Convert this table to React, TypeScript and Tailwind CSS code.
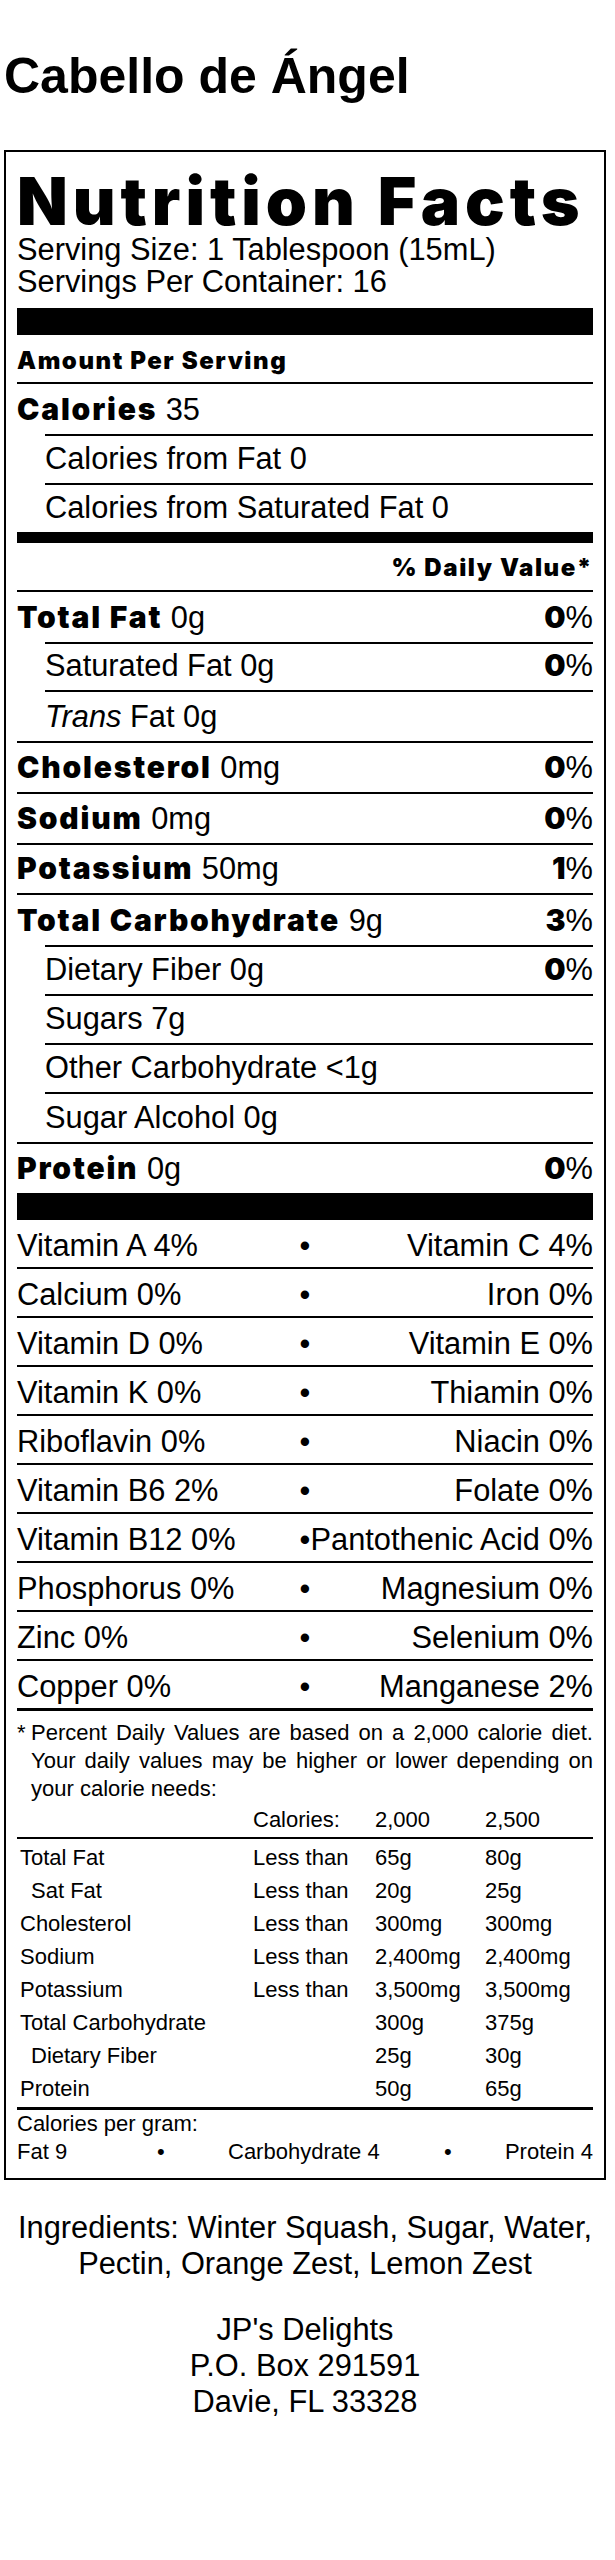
import React from "react";

const sans = "font-['Liberation_Sans',Arial,Helvetica,sans-serif]";
const heavy = "font-['Inter',sans-serif] font-black";
const label = `${heavy} text-[30px] tracking-[0.06em]`;

type Nut = {
  label: string;
  rest: string;
  dv?: string;
  bold?: boolean;
  indent?: boolean;
  italicTrans?: boolean;
  h: string;
};

const nutrients: Nut[] = [
  { label: "Total Fat", rest: "0g", dv: "0", bold: true, h: "h-[52px]" },
  { label: "Saturated Fat", rest: "0g", dv: "0", indent: true, h: "h-[48px]" },
  { label: "Fat", rest: "0g", indent: true, italicTrans: true, h: "h-[51px]" },
  { label: "Cholesterol", rest: "0mg", dv: "0", bold: true, h: "h-[51px]" },
  { label: "Sodium", rest: "0mg", dv: "0", bold: true, h: "h-[51px]" },
  { label: "Potassium", rest: "50mg", dv: "1", bold: true, h: "h-[50px]" },
  { label: "Total Carbohydrate", rest: "9g", dv: "3", bold: true, h: "h-[52px]" },
  { label: "Dietary Fiber", rest: "0g", dv: "0", indent: true, h: "h-[49px]" },
  { label: "Sugars", rest: "7g", indent: true, h: "h-[49px]" },
  { label: "Other Carbohydrate", rest: "<1g", indent: true, h: "h-[49px]" },
  { label: "Sugar Alcohol", rest: "0g", indent: true, h: "h-[50px]" },
  { label: "Protein", rest: "0g", dv: "0", bold: true, h: "h-[51px]" },
];

const vitamins: [string, string][] = [
  ["Vitamin A 4%", "Vitamin C 4%"],
  ["Calcium 0%", "Iron 0%"],
  ["Vitamin D 0%", "Vitamin E 0%"],
  ["Vitamin K 0%", "Thiamin 0%"],
  ["Riboflavin 0%", "Niacin 0%"],
  ["Vitamin B6 2%", "Folate 0%"],
  ["Vitamin B12 0%", "Pantothenic Acid 0%"],
  ["Phosphorus 0%", "Magnesium 0%"],
  ["Zinc 0%", "Selenium 0%"],
  ["Copper 0%", "Manganese 2%"],
];

const dvRows: [string, string, string, string, boolean][] = [
  ["Total Fat", "Less than", "65g", "80g", false],
  ["Sat Fat", "Less than", "20g", "25g", true],
  ["Cholesterol", "Less than", "300mg", "300mg", false],
  ["Sodium", "Less than", "2,400mg", "2,400mg", false],
  ["Potassium", "Less than", "3,500mg", "3,500mg", false],
  ["Total Carbohydrate", "", "300g", "375g", false],
  ["Dietary Fiber", "", "25g", "30g", true],
  ["Protein", "", "50g", "65g", false],
];

export default function App() {
  return (
    <div className={`${sans} w-[615px] bg-white pb-[120px] pl-[4px] pt-[48px] text-black`}>
      <h1 className="whitespace-nowrap text-[50px] font-bold leading-[56px]">Cabello de Ángel</h1>

      <div className="mt-[46px] w-[602px] border-2 border-black px-[11px] pb-[12px] pt-[16px]">
        <div className={`${heavy} whitespace-nowrap text-[66px] leading-[66px] tracking-[0.075em]`}>
          Nutrition Facts
        </div>
        <div className="text-[30.8px] leading-[32px]">Serving Size: 1 Tablespoon (15mL)</div>
        <div className="text-[30.8px] leading-[32px]">Servings Per Container: 16</div>
        <div className="mt-[10px] h-[27px] bg-black" />

        <div className={`flex h-[47px] items-end pb-[7px] ${heavy} text-[24px] leading-[28px] tracking-[0.065em]`}>
          Amount Per Serving
        </div>

        <div className="flex h-[52px] items-end border-t-2 border-black pb-[6px] text-[30.8px] leading-[36px]">
          <span>
            <span className={label}>Calories</span> 35
          </span>
        </div>
        <div className="ml-[28px] flex h-[49px] items-end border-t-2 border-black pb-[6px] text-[30.8px] leading-[36px]">
          Calories from Fat 0
        </div>
        <div className="ml-[28px] flex h-[49px] items-end border-t-2 border-black pb-[6px] text-[30.8px] leading-[36px]">
          Calories from Saturated Fat 0
        </div>
        <div className="h-[11px] bg-black" />

        <div
          className={`flex h-[47px] items-end justify-end pb-[8px] ${heavy} text-[24px] leading-[28px] tracking-[0.065em]`}
        >
          % Daily Value*
        </div>

        {nutrients.map((n, i) => (
          <div
            key={i}
            className={`flex items-end justify-between border-t-2 border-black pb-[6px] text-[30.8px] leading-[36px] ${n.h} ${
              n.indent ? "ml-[28px]" : ""
            }`}
          >
            <span className="whitespace-nowrap">
              {n.italicTrans && <span className="italic">Trans </span>}
              {n.bold ? <span className={label}>{n.label}</span> : n.label} {n.rest}
            </span>
            {n.dv !== undefined && (
              <span>
                <span className={`${heavy} text-[30px]`}>{n.dv}</span>%
              </span>
            )}
          </div>
        ))}

        <div className="h-[27px] bg-black" />

        {vitamins.map(([l, r], i) => (
          <div
            key={i}
            className={`grid grid-cols-[1fr_auto_1fr] items-end border-black pb-[3px] text-[30.8px] leading-[36px] ${
              i === vitamins.length - 1 ? "h-[50px] border-b-[3px]" : "h-[49px] border-b-2"
            }`}
          >
            <span className="whitespace-nowrap">{l}</span>
            <span>•</span>
            <span className="whitespace-nowrap text-right">{r}</span>
          </div>
        ))}

        <div className="flex pt-[8px] text-[22px] leading-[28px]">
          <span className="w-[14px] shrink-0">*</span>
          <p className="text-justify">
            Percent Daily Values are based on a 2,000 calorie diet. Your daily values may be higher or lower
            depending on your calorie needs:
          </p>
        </div>

        <div className="grid grid-cols-[236px_122px_110px_1fr] border-b-2 border-black pb-[3px] pt-[3px] text-[22px] leading-[28px]">
          <span />
          <span>Calories:</span>
          <span>2,000</span>
          <span>2,500</span>
        </div>
        <div className="grid grid-cols-[236px_122px_110px_1fr] border-b-[3px] border-black pb-[2px] pt-[2px] text-[22px] leading-[33px]">
          {dvRows.map(([a, b, c, d, ind], i) => (
            <React.Fragment key={i}>
              <span className={ind ? "pl-[14px]" : "pl-[3px]"}>{a}</span>
              <span>{b}</span>
              <span>{c}</span>
              <span>{d}</span>
            </React.Fragment>
          ))}
        </div>

        <div className="text-[22px] leading-[28px]">Calories per gram:</div>
        <div className="flex text-[22px] leading-[28px]">
          <span className="w-[140px] shrink-0">Fat 9</span>
          <span className="w-[71px] shrink-0">•</span>
          <span className="w-[216px] shrink-0">Carbohydrate 4</span>
          <span>•</span>
          <span className="flex-1 text-right">Protein 4</span>
        </div>
      </div>

      <div className="w-[602px] text-center text-[30.8px] leading-[36px]">
        <p className="mt-[30px]">Ingredients: Winter Squash, Sugar, Water, Pectin, Orange Zest, Lemon Zest</p>
        <p className="mt-[30px]">
          JP's Delights
          <br />
          P.O. Box 291591
          <br />
          Davie, FL 33328
        </p>
      </div>
    </div>
  );
}
